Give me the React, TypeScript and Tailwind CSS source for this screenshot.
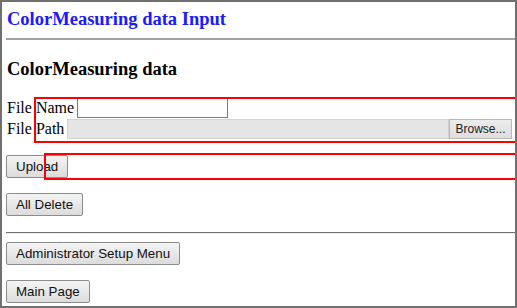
import * as React from 'react';

// Legacy-looking push button (IE style gradient)
function LegacyButton({ label, className = '' }: { label: string; className?: string }) {
  return (
    <button
      type="button"
      className={`h-[23px] rounded-[2px] border border-[#8c8c8c] bg-gradient-to-b from-[#f4f4f4] to-[#dcdcdc] px-[9px] font-['Liberation_Sans',Arial,sans-serif] text-[13.33px] leading-none text-[#111] ${className}`}
    >
      {label}
    </button>
  );
}

export default function App() {
  return (
    <div className="relative box-border h-[308px] w-[517px] overflow-hidden border-2 border-[#707070] bg-white pl-[4px] font-['Liberation_Serif','Times_New_Roman',serif] text-black">
      {/* Page title */}
      <h3 className="mt-[7px] pl-[1px] text-[18.5px] font-bold leading-[21.5px] text-[#1a1aff]">
        ColorMeasuring data Input
      </h3>
      <div className="mt-[7px] h-[2px] bg-[#a0a0a0]" />

      <h3 className="mt-[19px] pl-[1px] text-[18.5px] font-bold leading-[21.5px]">ColorMeasuring data</h3>

      {/* Form rows */}
      <div className="mt-[18px] flex h-[21px] items-start pl-[1px] text-[16px] leading-[20px]">
        <span>File Name</span>
        <span className="ml-[3px] h-[20px] w-[151px] border border-[#7a7a7a] bg-white" />
      </div>
      <div className="flex h-[20px] items-center pl-[1px] text-[16px] leading-none">
        <span>File Path</span>
        <span className="ml-[3px] flex h-[20px] flex-1 items-stretch">
          <span className="flex-1 border border-[#d2d2d2] bg-[#e5e5e5]" />
          <span className="mr-[3px] flex w-[63px] items-center justify-center border border-[#b8b8b8] bg-gradient-to-b from-[#ececec] to-[#dedede] font-['Liberation_Sans',Arial,sans-serif] text-[12px] text-[#222]">
            Browse...
          </span>
        </span>
      </div>

      <div className="mt-[16px] flex">
        <LegacyButton label="Upload" />
      </div>
      <div className="mt-[15px] flex">
        <LegacyButton label="All Delete" />
      </div>

      <div className="mt-[16px] h-[2px] border-t border-[#6f6f6f] bg-[#efefef]" />

      <div className="mt-[8px] flex">
        <LegacyButton label="Administrator Setup Menu" />
      </div>
      <div className="mt-[15px] flex">
        <LegacyButton label="Main Page" />
      </div>

      {/* Red highlight annotations */}
      <div className="absolute left-[32px] top-[95px] h-[46px] w-[500px] border-2 border-[#ff0000]" />
      <div className="absolute left-[42px] top-[151px] h-[27px] w-[490px] border-2 border-[#ff0000]" />
    </div>
  );
}
